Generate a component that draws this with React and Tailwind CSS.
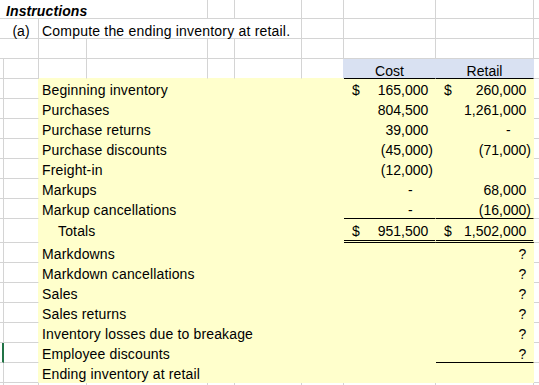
import React from "react";

const ROW = "grid grid-cols-[4px_35px_48px_121px_27px_67px_42px_92px_98px_1fr]";

const gridCell = "flex items-end border-r border-b border-r-[#d4d4d4] border-b-[#d4d4d4]";
const aTop = "border-b border-b-[#d4d4d4]";
const aCell = "border-r border-b border-r-[#d4d4d4] border-b-[#d4d4d4]";
const aGreen = "border-r-2 border-b border-r-[#217346] border-b-[#d4d4d4]";
const bYellow = "border-r border-b border-r-[#ffffcc] border-b-[#d4d4d4]";
const yCell = "flex items-end bg-[#ffffcc] border-r border-b border-r-[#ffffcc] border-b-[#ffffcc]";
const yCellBlack = "flex items-end bg-[#ffffcc] border-r border-b border-r-[#ffffcc] border-b-black";
const yCellDouble = "flex items-end bg-[#ffffcc] border-r border-b-[3px] border-double border-r-[#ffffcc] border-b-black pb-[1px]";
const yLabelTotals = "flex items-end bg-[#ffffcc] border-r border-b-[3px] border-r-[#ffffcc] border-b-[#ffffcc] pb-[1px]";
const jCell = "border-b border-b-[#d4d4d4]";

function Num({ dollar, value }) {
  const neg = typeof value === "string" && value.startsWith("(");
  let right;
  if (value === "-") {
    right = (
      <span>
        -<span className="invisible">00)</span>
      </span>
    );
  } else if (value === "" || value == null) {
    right = null;
  } else if (neg) {
    right = <span>{value}</span>;
  } else {
    right = (
      <span>
        {value}
        <span className="invisible">)</span>
      </span>
    );
  }
  return (
    <div className="flex w-full items-end justify-between pl-[3px] pr-[2px]">
      <span className="ml-[5px]">{dollar ? "$" : ""}</span>
      {right}
    </div>
  );
}

const rows = [
  { label: "Beginning inventory", cost: "165,000", retail: "260,000", dollar: true },
  { label: "Purchases", cost: "804,500", retail: "1,261,000" },
  { label: "Purchase returns", cost: "39,000", retail: "-" },
  { label: "Purchase discounts", cost: "(45,000)", retail: "(71,000)" },
  { label: "Freight-in", cost: "(12,000)", retail: "" },
  { label: "Markups", cost: "-", retail: "68,000" },
  { label: "Markup cancellations", cost: "-", retail: "(16,000)", underline: true },
  { label: "Totals", cost: "951,500", retail: "1,502,000", dollar: true, totals: true },
  { label: "Markdowns", cost: "", retail: "?" },
  { label: "Markdown cancellations", cost: "", retail: "?" },
  { label: "Sales", cost: "", retail: "?" },
  { label: "Sales returns", cost: "", retail: "?" },
  { label: "Inventory losses due to breakage", cost: "", retail: "?" },
  { label: "Employee discounts", cost: "", retail: "?", green: true, retailLine: true },
  { label: "Ending inventory at retail", cost: "", retail: "" },
];

export default function App() {
  return (
    <div className="w-[539px] h-[385px] overflow-hidden bg-white text-black font-['Liberation_Sans',Arial,sans-serif] text-[14px] leading-[16px] flex flex-col">
      {/* Row 0 */}
      <div className={`${ROW} h-[19px] shrink-0 leading-[14px]`}>
        <div className={aTop} />
        <div className={`${gridCell} col-span-3 pl-[2px] font-bold italic whitespace-nowrap tracking-[0.1px]`}>Instructions</div>
        <div className={gridCell} />
        <div className={gridCell} />
        <div className={gridCell} />
        <div className={gridCell} />
        <div className={gridCell} />
        <div className={jCell} />
      </div>
      {/* Row 1 */}
      <div className={`${ROW} h-[20px] shrink-0 leading-[14px]`}>
        <div className={aTop} />
        <div className={`${gridCell} justify-center`}>(a)</div>
        <div className={`${gridCell} col-span-4 pl-[3px] whitespace-nowrap tracking-[0.2px]`}>Compute the ending inventory at retail.</div>
        <div className={gridCell} />
        <div className={gridCell} />
        <div className={gridCell} />
        <div className={jCell} />
      </div>
      {/* Row 2 */}
      <div className={`${ROW} h-[20px] shrink-0`}>
        <div className={aTop} />
        <div className={gridCell} />
        <div className={gridCell} />
        <div className={gridCell} />
        <div className={gridCell} />
        <div className={gridCell} />
        <div className={gridCell} />
        <div className={gridCell} />
        <div className={gridCell} />
        <div className={jCell} />
      </div>
      {/* Row 3: header */}
      <div className={`${ROW} h-[20px] shrink-0 leading-[14px]`}>
        <div className={aCell} />
        <div className={gridCell} />
        <div className="border-r border-b border-r-[#d4d4d4] border-b-[#ffffcc]" />
        <div className="border-r border-b border-r-[#d4d4d4] border-b-[#ffffcc]" />
        <div className="border-r border-b border-r-[#d4d4d4] border-b-[#ffffcc]" />
        <div className="border-r border-b border-r-[#d4d4d4] border-b-[#ffffcc]" />
        <div className="border-r border-b border-r-[#d9e1f2] border-b-[#ffffcc]" />
        <div className="flex items-end justify-center bg-[#d9e1f2] border-r border-b border-r-[#d9e1f2] border-b-black">Cost</div>
        <div className="flex items-end justify-center bg-[#d9e1f2] border-r border-b border-r-[#d9e1f2] border-b-black">Retail</div>
        <div className={jCell} />
      </div>
      {/* Data rows */}
      {rows.map((r) => (
        <div key={r.label} className={`${ROW} ${r.totals ? "h-[24px]" : "h-[20px]"} shrink-0`}>
          <div className={r.green ? aGreen : aCell} />
          <div className={bYellow} />
          <div
            className={`${r.totals ? yLabelTotals : yCell} col-span-5 whitespace-nowrap tracking-[0.15px] ${r.totals ? "pl-[19px]" : "pl-[3px]"}`}
          >
            {r.label}
          </div>
          <div className={r.underline ? yCellBlack : r.totals ? yCellDouble : yCell}>
            <Num dollar={r.dollar} value={r.cost} />
          </div>
          <div className={r.underline || r.retailLine ? yCellBlack : r.totals ? yCellDouble : yCell}>
            <Num dollar={r.dollar} value={r.retail} />
          </div>
          <div className={jCell} />
        </div>
      ))}
      {/* Row below */}
      <div className={`${ROW} flex-1`}>
        <div className="border-r border-r-[#d4d4d4]" />
        <div className="border-r border-r-[#d4d4d4]" />
        <div className="border-r border-r-[#d4d4d4]" />
        <div className="border-r border-r-[#d4d4d4]" />
        <div className="border-r border-r-[#d4d4d4]" />
        <div className="border-r border-r-[#d4d4d4]" />
        <div className="border-r border-r-[#d4d4d4]" />
        <div className="border-r border-r-[#d4d4d4]" />
        <div className="border-r border-r-[#d4d4d4]" />
        <div />
      </div>
    </div>
  );
}
